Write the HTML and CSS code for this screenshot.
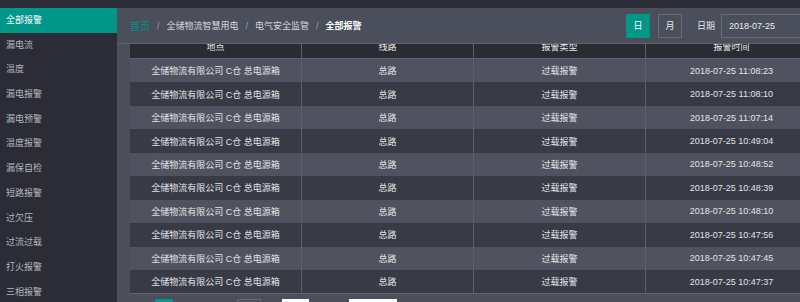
FILE: index.html
```html
<!DOCTYPE html>
<html lang="zh-CN">
<head>
    <meta charset="UTF-8">
    <title>全部报警</title>
    <link rel="stylesheet" href="styles.css">
</head>
<body>
    <div class="topbar"></div>
    <div class="layout">
        <aside class="sidebar">
            <ul>
                <li class="active">全部报警</li>
                <li>漏电流</li>
                <li>温度</li>
                <li>漏电报警</li>
                <li>漏电预警</li>
                <li>温度报警</li>
                <li>漏保自检</li>
                <li>短路报警</li>
                <li>过欠压</li>
                <li>过流过载</li>
                <li>打火报警</li>
                <li>三相报警</li>
            </ul>
        </aside>
        <main class="content">
            <div class="toolbar">
                <div class="crumbs">
                    <a class="home">首页</a><span class="sep">/</span>
                    <span>全储物流智慧用电</span><span class="sep">/</span>
                    <span>电气安全监管</span><span class="sep">/</span>
                    <b>全部报警</b>
                </div>
                <div class="tools">
                    <button class="btn on">日</button>
                    <button class="btn">月</button>
                    <span class="label">日期</span>
                    <input class="date" type="text" value="2018-07-25">
                </div>
            </div>
            <div class="panel">
                <div class="grid-wrap">
                    <table class="grid">
                        <thead>
                            <tr><th>地点</th><th>线路</th><th>报警类型</th><th>报警时间</th></tr>
                        </thead>
                        <tbody>
                            <tr><td>全储物流有限公司 C仓 总电源箱</td><td>总路</td><td>过载报警</td><td>2018-07-25 11:08:23</td></tr>
                            <tr><td>全储物流有限公司 C仓 总电源箱</td><td>总路</td><td>过载报警</td><td>2018-07-25 11:08:10</td></tr>
                            <tr><td>全储物流有限公司 C仓 总电源箱</td><td>总路</td><td>过载报警</td><td>2018-07-25 11:07:14</td></tr>
                            <tr><td>全储物流有限公司 C仓 总电源箱</td><td>总路</td><td>过载报警</td><td>2018-07-25 10:49:04</td></tr>
                            <tr><td>全储物流有限公司 C仓 总电源箱</td><td>总路</td><td>过载报警</td><td>2018-07-25 10:48:52</td></tr>
                            <tr><td>全储物流有限公司 C仓 总电源箱</td><td>总路</td><td>过载报警</td><td>2018-07-25 10:48:39</td></tr>
                            <tr><td>全储物流有限公司 C仓 总电源箱</td><td>总路</td><td>过载报警</td><td>2018-07-25 10:48:10</td></tr>
                            <tr><td>全储物流有限公司 C仓 总电源箱</td><td>总路</td><td>过载报警</td><td>2018-07-25 10:47:56</td></tr>
                            <tr><td>全储物流有限公司 C仓 总电源箱</td><td>总路</td><td>过载报警</td><td>2018-07-25 10:47:45</td></tr>
                            <tr><td>全储物流有限公司 C仓 总电源箱</td><td>总路</td><td>过载报警</td><td>2018-07-25 10:47:37</td></tr>
                        </tbody>
                    </table>
                </div>
                <div class="pager">
                    <span class="pg cur"></span>
                    <span class="pg line"></span>
                    <span class="pg white small"></span>
                    <span class="pg white wide"></span>
                </div>
            </div>
        </main>
    </div>
</body>
</html>
```

FILE: styles.css
```css
/* page frame */
body {
    margin: 0;
    padding: 0;
    height: 302px;
    overflow: hidden;
    background: #2b2c35;
    font-family: "Liberation Sans", "Noto Sans CJK SC", sans-serif;
    font-size: 9px;
    color: #e2e3e6;
}

.topbar {
    height: 8px;
    background: #2b2c35;
}

.layout {
    display: flex;
    height: 294px;
}

/* left menu */
.sidebar {
    width: 117px;
    flex-shrink: 0;
    background: #2b2c35;
}

.sidebar ul {
    list-style: none;
    margin: 0;
    padding: 0;
}

.sidebar li {
    height: 24.7px;
    line-height: 24.7px;
    padding-left: 6px;
    color: #b4b6bd;
}

.sidebar li.active {
    background: #009688;
    color: #fff;
}

/* main area */
.content {
    width: 720px;
    flex-shrink: 0;
    background: #4b4e5b;
}

.toolbar {
    height: 35px;
    border-bottom: 1px solid #5f6271;
    display: flex;
    align-items: center;
    padding: 0 16px 0 13px;
}

.crumbs {
    color: #d5d6da;
    display: flex;
    align-items: center;
}

.crumbs .home {
    color: #009688;
    font-size: 10px;
}

.crumbs .sep {
    color: #9c9ea8;
    margin: 0 7px;
}

.crumbs b {
    color: #fff;
}

.tools {
    margin-left: auto;
    display: flex;
    align-items: center;
}

.btn {
    width: 24px;
    height: 24px;
    padding: 0;
    border: 1px solid #676a78;
    background: transparent;
    color: #e6e7ea;
    font-family: inherit;
    font-size: 9px;
    margin-right: 8px;
}

.btn.on {
    background: #009688;
    border-color: #009688;
    color: #fff;
}

.label {
    color: #e6e7ea;
    margin: 0 6px 0 7px;
}

.date {
    width: 100px;
    height: 24px;
    box-sizing: border-box;
    border: 1px solid #676a78;
    background: transparent;
    color: #eceef0;
    font-family: inherit;
    font-size: 9px;
    padding: 0 7px;
}

/* table */
.panel {
    padding-left: 13px;
}

.grid-wrap {
    height: 249px;
    overflow: hidden;
    border-bottom: 1px solid #5f6271;
}

.grid {
    border-collapse: collapse;
    table-layout: fixed;
    width: 684px;
    margin-top: -10px;
}

.grid th,
.grid td {
    width: 171px;
    padding: 0;
    text-align: center;
    font-weight: normal;
    border-left: 1px solid #5b5e6b;
}

.grid th:first-child,
.grid td:first-child {
    border-left: none;
}

.grid th {
    height: 24px;
    background: #2a2b33;
    color: #e8e9ec;
    border-bottom: 1px solid #5f6271;
}

.grid td {
    height: 23.45px;
    color: #e2e3e6;
}

.grid tbody tr:nth-child(odd) {
    background: #50535f;
}

.grid tbody tr:nth-child(even) {
    background: #383a45;
}

/* pager, mostly below the fold */
.pager {
    display: flex;
    align-items: flex-start;
    padding: 5px 0 0 25px;
}

.pg {
    display: block;
    height: 20px;
}

.pg.cur {
    width: 18px;
    background: #009688;
}

.pg.line {
    width: 22px;
    border: 1px solid #676a78;
    margin-left: 64px;
}

.pg.white {
    background: #fff;
}

.pg.small {
    width: 27px;
    margin-left: 21px;
}

.pg.wide {
    width: 48px;
    margin-left: 40px;
}
```
